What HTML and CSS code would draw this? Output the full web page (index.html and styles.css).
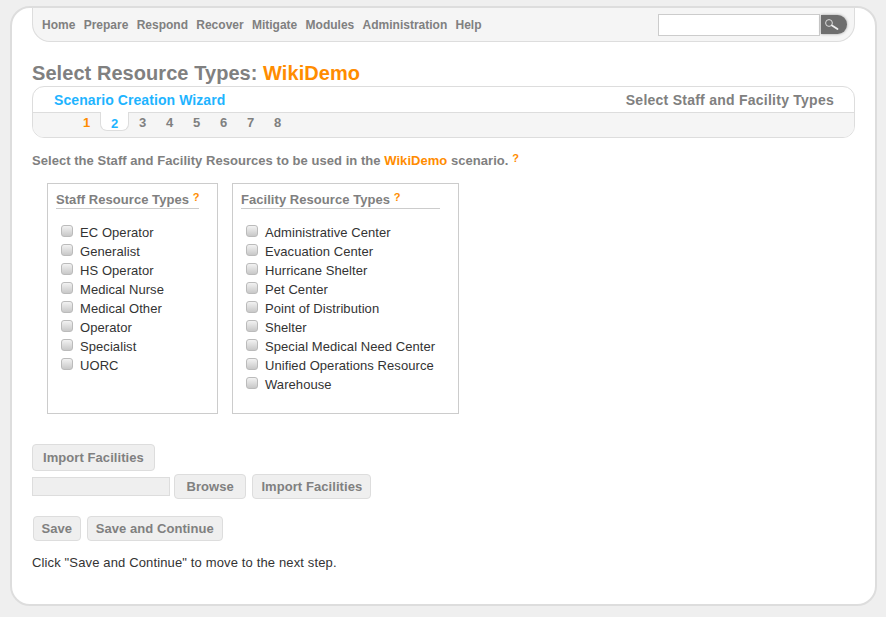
FILE: index.html
```html
<!DOCTYPE html>
<html lang="en">
<head>
<meta charset="utf-8">
<title>Select Resource Types</title>
<link rel="stylesheet" href="styles.css">
</head>
<body>
<div class="panel">
  <nav class="nav">
    <a>Home</a><a>Prepare</a><a>Respond</a><a>Recover</a><a>Mitigate</a><a>Modules</a><a>Administration</a><a>Help</a>
    <form class="search">
      <input class="search-input" type="text">
      <button class="search-btn" type="button" aria-label="Search">
        <svg width="18" height="14" viewBox="0 0 18 14"><circle cx="6" cy="5" r="3.4" fill="none" stroke="#ddd" stroke-width="1"/><path d="M9 7.5l5.5 3.6" stroke="#eee" stroke-width="1.8" stroke-linecap="round"/></svg>
      </button>
    </form>
  </nav>
  <h1 class="title">Select Resource Types: <span class="hl">WikiDemo</span></h1>
  <div class="wizard">
    <div class="wizard-head"><span class="wizard-name">Scenario Creation Wizard</span><span class="wizard-step">Select Staff and Facility Types</span></div>
    <div class="wizard-tabs">
      <span class="tab done">1</span><span class="tab active">2</span><span class="tab">3</span><span class="tab">4</span><span class="tab">5</span><span class="tab">6</span><span class="tab">7</span><span class="tab">8</span>
    </div>
  </div>
  <p class="intro">Select the Staff and Facility Resources to be used in the <span class="hl">WikiDemo</span> scenario. <sup class="help">?</sup></p>
  <div class="columns">
    <section class="col col-staff">
      <h2 class="col-title">Staff Resource Types <sup class="help">?</sup></h2>
      <ul class="list">
        <li><input type="checkbox"><label>EC Operator</label></li>
        <li><input type="checkbox"><label>Generalist</label></li>
        <li><input type="checkbox"><label>HS Operator</label></li>
        <li><input type="checkbox"><label>Medical Nurse</label></li>
        <li><input type="checkbox"><label>Medical Other</label></li>
        <li><input type="checkbox"><label>Operator</label></li>
        <li><input type="checkbox"><label>Specialist</label></li>
        <li><input type="checkbox"><label>UORC</label></li>
      </ul>
    </section>
    <section class="col col-fac">
      <h2 class="col-title">Facility Resource Types <sup class="help">?</sup></h2>
      <ul class="list">
        <li><input type="checkbox"><label>Administrative Center</label></li>
        <li><input type="checkbox"><label>Evacuation Center</label></li>
        <li><input type="checkbox"><label>Hurricane Shelter</label></li>
        <li><input type="checkbox"><label>Pet Center</label></li>
        <li><input type="checkbox"><label>Point of Distribution</label></li>
        <li><input type="checkbox"><label>Shelter</label></li>
        <li><input type="checkbox"><label>Special Medical Need Center</label></li>
        <li><input type="checkbox"><label>Unified Operations Resource</label></li>
        <li><input type="checkbox"><label>Warehouse</label></li>
      </ul>
    </section>
  </div>
  <div class="import">
    <button class="btn btn-tall" type="button">Import Facilities</button>
    <div class="file-row">
      <span class="file-box"></span>
      <button class="btn btn-browse" type="button">Browse</button>
      <button class="btn" type="button">Import Facilities</button>
    </div>
  </div>
  <div class="actions">
    <button class="btn btn-save" type="button">Save</button>
    <button class="btn" type="button">Save and Continue</button>
  </div>
  <p class="note">Click "Save and Continue" to move to the next step.</p>
</div>
</body>
</html>
```
FILE: styles.css
```css
* { box-sizing: border-box; }
html, body { margin: 0; height: 100%; }
body {
  background: #efefef;
  padding: 6px 9px 11px 10px;
  font-family: "Liberation Sans", Arial, sans-serif;
  font-size: 13px;
  color: #333;
  overflow: hidden;
}
.panel {
  background: #fff;
  border: 2px solid #ddd;
  border-radius: 20px;
  height: 600px;
  padding: 0 20px;
}
.nav {
  display: flex;
  align-items: center;
  height: 34px;
  padding: 0 7px 0 9px;
  background: #f5f5f5;
  border: 1px solid #ddd;
  border-top: 0;
  border-radius: 0 0 18px 18px;
  font-size: 12px;
  font-weight: bold;
  color: #808080;
}
.nav a { margin-right: 8.3px; }
.search { margin-left: auto; display: flex; align-items: center; }
.search-input {
  width: 162px;
  height: 22px;
  border: 1px solid #ccc;
  background: #fff;
  padding: 0;
  margin: 0;
}
.search-btn {
  width: 26px;
  height: 19px;
  margin: 0 0 0 1px;
  padding: 0 0 0 2px;
  border: 0;
  border-radius: 0 10px 10px 0;
  background: #6e6e6e;
  box-shadow: 0 0 3px #999;
  display: flex;
  align-items: center;
  justify-content: flex-start;
}
.title {
  margin: 19px 0 0;
  font-size: 20px;
  line-height: 24px;
  font-weight: bold;
  color: #808080;
  letter-spacing: 0.06px;
}
.hl { color: #ff8c00; font-weight: bold; }
.wizard {
  margin-top: 1px;
  height: 52px;
  border: 1px solid #ddd;
  border-radius: 12px;
  overflow: hidden;
}
.wizard-head {
  display: flex;
  justify-content: space-between;
  align-items: center;
  height: 26px;
  padding: 0 20px 0 21px;
  font-size: 14px;
  font-weight: bold;
  border-bottom: 1px solid #ddd;
}
.wizard-name { color: #1eb4ff; letter-spacing: 0.08px; }
.wizard-step { color: #808080; letter-spacing: 0.25px; }
.wizard-tabs {
  display: flex;
  height: 24px;
  padding-left: 40px;
  background: #f5f5f5;
  font-size: 13px;
  font-weight: bold;
  color: #808080;
}
.tab { width: 27px; text-align: center; line-height: 19px; }
.tab.done { color: #ff8c00; width: 27px; }
.tab.active {
  width: 29px;
  height: 19px;
  margin-top: -1px;
  color: #1eb4ff;
  background: #fff;
  border: 1px solid #ddd;
  border-top: 0;
  border-radius: 0 0 7px 7px;
  line-height: 24px;
}
.intro {
  margin: 15px 0 0;
  line-height: 15px;
  font-weight: bold;
  color: #808080;
  letter-spacing: 0.045px;
}
.help {
  font-size: 11px;
  font-weight: bold;
  color: #ff8c00;
  line-height: 0;
  vertical-align: 3px;
}
.columns {
  display: flex;
  gap: 14px;
  margin: 15px 0 0 15px;
}
.col {
  height: 231px;
  border: 1px solid #ccc;
  padding: 8px 18px 0 8px;
}
.col-staff { width: 171px; }
.col-fac { width: 227px; }
.col-title {
  margin: 0;
  font-size: 13px;
  line-height: 16px;
  font-weight: bold;
  color: #808080;
  border-bottom: 1px solid #ccc;
  letter-spacing: 0.05px;
  white-space: nowrap;
}
.list {
  list-style: none;
  margin: 14px -18px 0 0;
  padding: 0 0 0 5px;
}
.list li {
  display: flex;
  height: 19px;
  line-height: 19px;
  letter-spacing: 0.07px;
}
.list input {
  appearance: none;
  width: 12px;
  height: 12px;
  margin: 2px 7px 0 0;
  border: 1px solid #bbb;
  border-radius: 3px;
  background: linear-gradient(#f2f2f2, #c8c8c8);
  flex: none;
}
.import { margin-top: 30px; }
.btn {
  font-family: inherit;
  font-size: 13px;
  font-weight: bold;
  color: #808080;
  height: 25px;
  padding: 0 8px;
  background: #efefef;
  border: 1px solid #ddd;
  border-radius: 4px;
  margin: 0;
  letter-spacing: 0.07px;
}
.btn-tall { height: 27px; padding: 0 10px; display: block; }
.btn-browse { padding: 0 11.5px; }
.btn-save { padding: 0 7.5px; }
.file-row {
  display: flex;
  align-items: center;
  gap: 6px;
  margin-top: 3px;
}
.file-box {
  width: 138px;
  height: 19px;
  background: #efefef;
  border: 1px solid #ddd;
  margin-right: -2px;
}
.actions {
  display: flex;
  gap: 6px;
  margin: 17px 0 0 1px;
}
.note { margin: 14px 0 0; line-height: 15px; letter-spacing: 0.14px; }
```
